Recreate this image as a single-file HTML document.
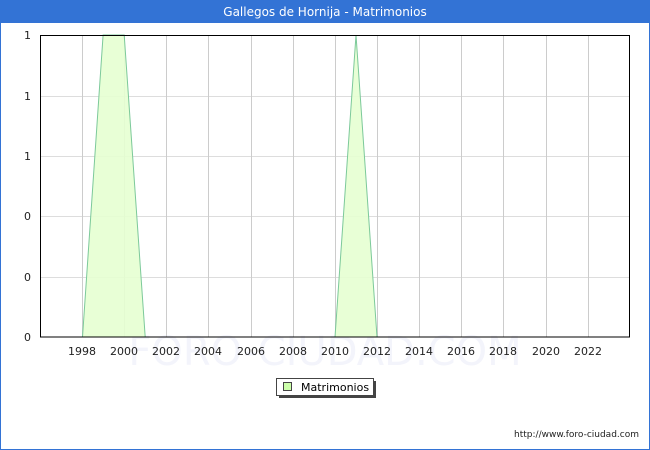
<!DOCTYPE html>
<html><head><meta charset="utf-8"><style>
html,body{margin:0;padding:0;width:650px;height:450px;overflow:hidden;background:#fff}
</style></head><body>
<svg width="650" height="450" xmlns="http://www.w3.org/2000/svg" font-family="DejaVu Sans, Liberation Sans, sans-serif">
<rect x="0" y="0" width="650" height="450" fill="#3373d5"/>
<rect x="1" y="23" width="648" height="426" fill="#fff"/>
<text x="325" y="16" fill="#fff" font-size="12" text-anchor="middle">Gallegos de Hornija - Matrimonios</text>
<text x="325" y="365" fill="#f3f4fb" font-size="40" text-anchor="middle">FORO-CIUDAD.COM</text>
<g stroke="#ddd" stroke-width="1">
<line x1="40" y1="96.5" x2="630" y2="96.5"/>
<line x1="40" y1="156.5" x2="630" y2="156.5"/>
<line x1="40" y1="216.5" x2="630" y2="216.5"/>
<line x1="40" y1="277.5" x2="630" y2="277.5"/>
</g>
<g stroke="#ccc" stroke-width="1">
<line x1="82.5" y1="35" x2="82.5" y2="337"/>
<line x1="124.5" y1="35" x2="124.5" y2="337"/>
<line x1="166.5" y1="35" x2="166.5" y2="337"/>
<line x1="208.5" y1="35" x2="208.5" y2="337"/>
<line x1="251.5" y1="35" x2="251.5" y2="337"/>
<line x1="293.5" y1="35" x2="293.5" y2="337"/>
<line x1="335.5" y1="35" x2="335.5" y2="337"/>
<line x1="377.5" y1="35" x2="377.5" y2="337"/>
<line x1="419.5" y1="35" x2="419.5" y2="337"/>
<line x1="461.5" y1="35" x2="461.5" y2="337"/>
<line x1="503.5" y1="35" x2="503.5" y2="337"/>
<line x1="546.5" y1="35" x2="546.5" y2="337"/>
<line x1="588.5" y1="35" x2="588.5" y2="337"/>
</g>
<polygon points="82.5,337 103.1,35 124.2,35 145.2,337" fill="#e6ffd2" fill-opacity="0.9" stroke="#7cc99a" stroke-width="1"/>
<polygon points="335,337 356,35 377,337" fill="#e6ffd2" fill-opacity="0.9" stroke="#7cc99a" stroke-width="1"/>
<rect x="40.5" y="35.5" width="589" height="301.5" fill="none" stroke="#000" stroke-width="1"/>
<g font-size="11" fill="#222" text-anchor="end">
<text x="31" y="39">1</text><text x="31" y="100">1</text><text x="31" y="160">1</text>
<text x="31" y="220">0</text><text x="31" y="281">0</text><text x="31" y="341">0</text>
</g>
<g font-size="11" fill="#222" text-anchor="middle">
<text x="82" y="355">1998</text><text x="124" y="355">2000</text><text x="166" y="355">2002</text>
<text x="208" y="355">2004</text><text x="251" y="355">2006</text><text x="293" y="355">2008</text>
<text x="335" y="355">2010</text><text x="377" y="355">2012</text><text x="419" y="355">2014</text>
<text x="461" y="355">2016</text><text x="503" y="355">2018</text><text x="546" y="355">2020</text>
<text x="588" y="355">2022</text>
</g>
<rect x="279" y="381" width="97" height="17" fill="#444"/>
<rect x="276.5" y="378.5" width="97" height="17" fill="#fff" stroke="#444"/>
<rect x="283.5" y="382.5" width="8" height="8" fill="#ccffaa" stroke="#444"/>
<text x="301" y="391" font-size="11" fill="#000">Matrimonios</text>
<text x="639" y="437" font-size="9" fill="#222" text-anchor="end" font-family="DejaVu Sans, sans-serif">http://www.foro-ciudad.com</text>
</svg>
</body></html>
